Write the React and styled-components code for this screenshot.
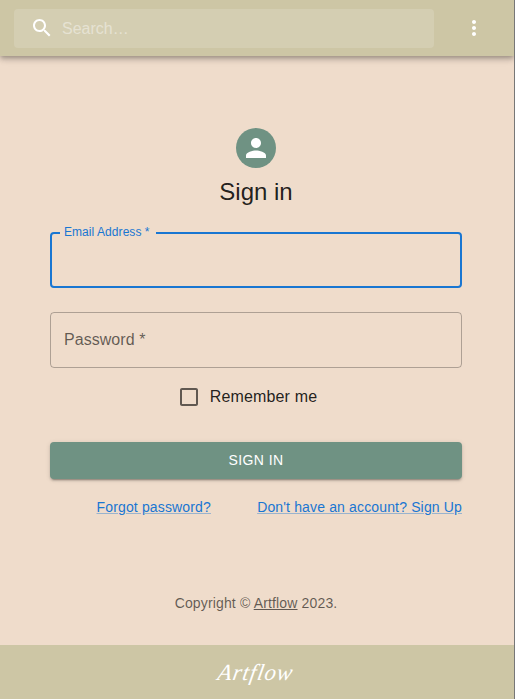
import React from "react";
import styled, { createGlobalStyle } from "styled-components";

const GlobalStyle = createGlobalStyle`
  *, *::before, *::after { box-sizing: border-box; }
  body {
    margin: 0;
    background: #efdccb;
    font-family: Arial, "Liberation Sans", sans-serif;
    font-size: 16px;
    line-height: 1.5;
    letter-spacing: 0.15008px;
    color: rgba(0, 0, 0, 0.87);
  }
`;

const Page = styled.div`
  display: flex;
  flex-direction: column;
  height: 699px;
  overflow: hidden;
  border-right: 1px solid #777;
`;

const AppBar = styled.header`
  display: flex;
  align-items: center;
  flex: 0 0 56px;
  padding: 0 28px 0 14px;
  background: #cdc6a5;
  color: #fff;
  box-shadow: 0 2px 4px -1px rgba(0, 0, 0, 0.2), 0 4px 5px 0 rgba(0, 0, 0, 0.14),
    0 1px 10px 0 rgba(0, 0, 0, 0.12);
`;

const Search = styled.label`
  display: flex;
  align-items: center;
  width: 420px;
  height: 39px;
  margin-top: 1px;
  padding: 0 0 1px 16px;
  gap: 8px;
  border-radius: 4px;
  background: rgba(255, 255, 255, 0.15);
`;

const SearchInput = styled.input`
  flex: 1;
  padding: 2px 0 0;
  border: 0;
  outline: 0;
  background: none;
  color: inherit;
  font: inherit;
  letter-spacing: 0;

  &::placeholder {
    color: #fff;
    opacity: 0.42;
  }
`;

const Icon = styled.svg`
  display: block;
  flex: none;
  width: ${(p) => p.$size || 24}px;
  height: ${(p) => p.$size || 24}px;
  fill: currentColor;
`;

const MenuButton = styled.button`
  display: flex;
  margin-left: auto;
  padding: 0;
  border: 0;
  background: none;
  color: inherit;
`;

const Main = styled.main`
  display: flex;
  flex-direction: column;
  align-items: center;
  flex: 1;
  width: 412px;
  margin-left: 50px;
  padding-top: 72px;
`;

const Avatar = styled.div`
  display: grid;
  place-items: center;
  width: 40px;
  height: 40px;
  border-radius: 50%;
  background: #6f9283;
  color: #fff;
`;

const Title = styled.h1`
  margin: 8px 0 24px;
  font-size: 24px;
  font-weight: 400;
  line-height: 32px;
  letter-spacing: 0;
`;

const Form = styled.form`
  display: flex;
  flex-direction: column;
  width: 100%;
`;

const Field = styled.fieldset`
  min-width: 0;
  height: ${(p) => (p.$focused ? 62 : 56)}px;
  margin: ${(p) => (p.$focused ? "-6px 0 0" : "24px 0 0")};
  padding: 0 ${(p) => (p.$focused ? 8 : 13)}px;
  border: ${(p) => (p.$focused ? "2px solid #1976d2" : "1px solid rgba(0, 0, 0, 0.27)")};
  border-radius: 4px;
`;

const FloatingLabel = styled.legend`
  width: 96px;
  height: 14px;
  padding: 0 0 0 4px;
  color: #1976d2;
  font-size: 12px;
  line-height: 12px;
  letter-spacing: 0.06px;
  white-space: nowrap;
`;

const RestingLabel = styled.span`
  display: block;
  color: rgba(0, 0, 0, 0.6);
  line-height: 53px;
  letter-spacing: 0.05px;
`;

const Remember = styled.label`
  display: flex;
  align-items: center;
  align-self: center;
  height: 42px;
  margin: 8px 0 0 -18px;
  gap: 9px;
`;

const CheckIcon = styled(Icon)`
  color: rgba(0, 0, 0, 0.6);
`;

const Submit = styled.button`
  height: 37px;
  margin: 24px 0 16px;
  padding: 0 0 1px;
  border: 0;
  border-radius: 4px;
  background: #6f9283;
  color: #fff;
  font: 500 14px/24px Arial, "Liberation Sans", sans-serif;
  letter-spacing: 0.4px;
  box-shadow: 0 3px 1px -2px rgba(0, 0, 0, 0.2), 0 2px 2px 0 rgba(0, 0, 0, 0.14),
    0 1px 5px 0 rgba(0, 0, 0, 0.12);
`;

const Links = styled.nav`
  display: flex;
  justify-content: space-between;
  padding-left: 46.5px;
  font-size: 14px;
  line-height: 24px;
`;

const Link = styled.a`
  color: ${(p) => (p.$muted ? "inherit" : "#1976d2")};
  text-decoration: underline;
  text-decoration-color: ${(p) => (p.$muted ? "currentColor" : "rgba(25, 118, 210, 0.4)")};
`;

const Copyright = styled.p`
  margin: 74px 0 0;
  color: rgba(0, 0, 0, 0.6);
  font-size: 14px;
  line-height: 20px;
`;

const Footer = styled.footer`
  display: flex;
  align-items: center;
  justify-content: center;
  flex: 0 0 54px;
  padding: 2px 3px 0 0;
  background: #cdc6a5;
  color: #fff;
`;

const Wordmark = styled.span`
  font-family: "Homemade Apple", "Liberation Serif", cursive;
  font-size: 23px;
  font-style: italic;
  line-height: 30px;
  letter-spacing: 0.9px;
  transform: skewX(-10deg);
`;

export default function App() {
  return (
    <>
      <GlobalStyle />
      <Page>
        <AppBar>
          <Search>
            <Icon viewBox="0 0 24 24">
              <path d="M15.5 14h-.79l-.28-.27C15.41 12.59 16 11.11 16 9.5 16 5.91 13.09 3 9.5 3S3 5.91 3 9.5 5.91 16 9.5 16c1.61 0 3.09-.59 4.23-1.57l.27.28v.79l5 4.99L20.49 19l-4.99-5zm-6 0C7.01 14 5 11.99 5 9.5S7.01 5 9.5 5 14 7.01 14 9.5 11.99 14 9.5 14z" />
            </Icon>
            <SearchInput placeholder="Search…" aria-label="Search" />
          </Search>
          <MenuButton aria-label="More">
            <Icon viewBox="0 0 24 24">
              <path d="M12 8c1.1 0 2-.9 2-2s-.9-2-2-2-2 .9-2 2 .9 2 2 2zm0 2c-1.1 0-2 .9-2 2s.9 2 2 2 2-.9 2-2-.9-2-2-2zm0 6c-1.1 0-2 .9-2 2s.9 2 2 2 2-.9 2-2-.9-2-2-2z" />
            </Icon>
          </MenuButton>
        </AppBar>
        <Main>
          <Avatar>
            <Icon viewBox="0 0 24 24" $size={30}>
              <path d="M12 12c2.21 0 4-1.79 4-4s-1.79-4-4-4-4 1.79-4 4 1.79 4 4 4zm0 2c-2.67 0-8 1.34-8 4v2h16v-2c0-2.66-5.33-4-8-4z" />
            </Icon>
          </Avatar>
          <Title>Sign in</Title>
          <Form>
            <Field $focused>
              <FloatingLabel>Email Address *</FloatingLabel>
            </Field>
            <Field>
              <RestingLabel>Password *</RestingLabel>
            </Field>
            <Remember>
              <CheckIcon viewBox="0 0 24 24">
                <path d="M19 5v14H5V5h14m0-2H5c-1.1 0-2 .9-2 2v14c0 1.1.9 2 2 2h14c1.1 0 2-.9 2-2V5c0-1.1-.9-2-2-2z" />
              </CheckIcon>
              Remember me
            </Remember>
            <Submit type="button">SIGN IN</Submit>
            <Links>
              <Link href="#">Forgot password?</Link>
              <Link href="#">Don't have an account? Sign Up</Link>
            </Links>
          </Form>
          <Copyright>
            Copyright © <Link $muted href="#">Artflow</Link> 2023.
          </Copyright>
        </Main>
        <Footer>
          <Wordmark>Artflow</Wordmark>
        </Footer>
      </Page>
    </>
  );
}
